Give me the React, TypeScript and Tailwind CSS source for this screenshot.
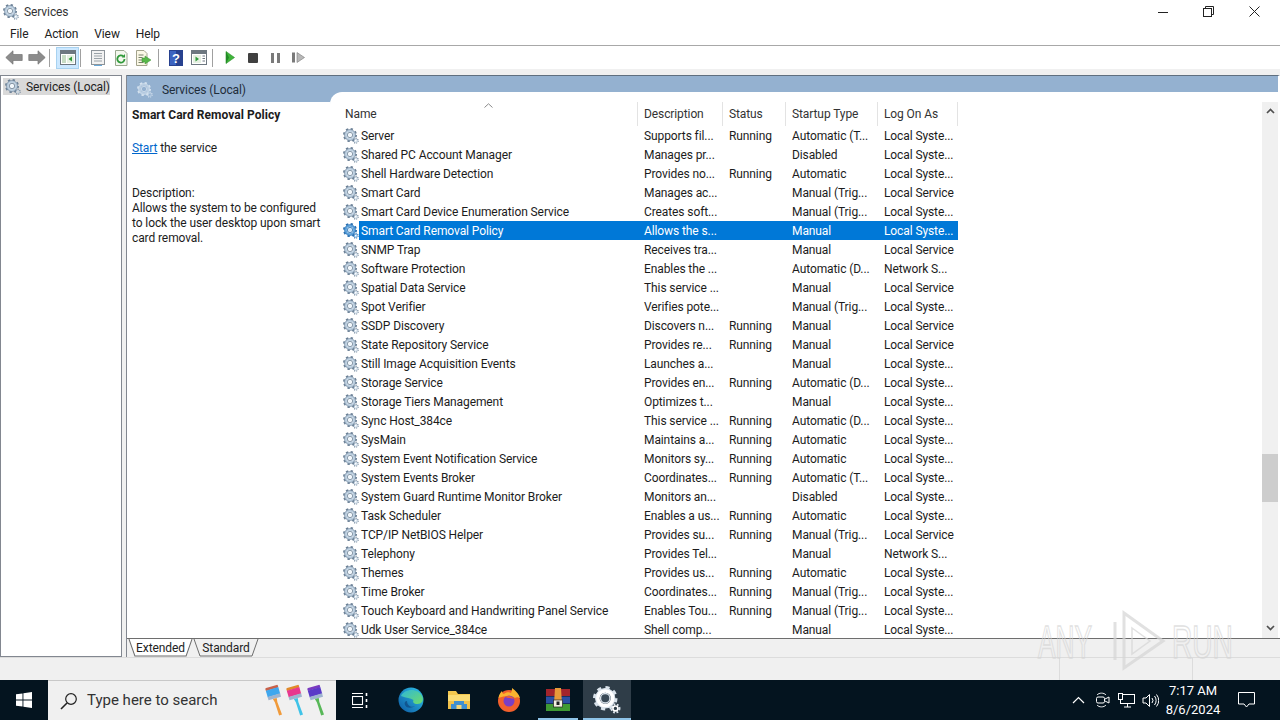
import type { ReactNode } from "react";

type Service = [string, string, string, string, string];

const services: Service[] = [
  ["Server", "Supports fil...", "Running", "Automatic (T...", "Local Syste..."],
  ["Shared PC Account Manager", "Manages pr...", "", "Disabled", "Local Syste..."],
  ["Shell Hardware Detection", "Provides no...", "Running", "Automatic", "Local Syste..."],
  ["Smart Card", "Manages ac...", "", "Manual (Trig...", "Local Service"],
  ["Smart Card Device Enumeration Service", "Creates soft...", "", "Manual (Trig...", "Local Syste..."],
  ["Smart Card Removal Policy", "Allows the s...", "", "Manual", "Local Syste..."],
  ["SNMP Trap", "Receives tra...", "", "Manual", "Local Service"],
  ["Software Protection", "Enables the ...", "", "Automatic (D...", "Network S..."],
  ["Spatial Data Service", "This service ...", "", "Manual", "Local Service"],
  ["Spot Verifier", "Verifies pote...", "", "Manual (Trig...", "Local Syste..."],
  ["SSDP Discovery", "Discovers n...", "Running", "Manual", "Local Service"],
  ["State Repository Service", "Provides re...", "Running", "Manual", "Local Service"],
  ["Still Image Acquisition Events", "Launches a...", "", "Manual", "Local Syste..."],
  ["Storage Service", "Provides en...", "Running", "Automatic (D...", "Local Syste..."],
  ["Storage Tiers Management", "Optimizes t...", "", "Manual", "Local Syste..."],
  ["Sync Host_384ce", "This service ...", "Running", "Automatic (D...", "Local Syste..."],
  ["SysMain", "Maintains a...", "Running", "Automatic", "Local Syste..."],
  ["System Event Notification Service", "Monitors sy...", "Running", "Automatic", "Local Syste..."],
  ["System Events Broker", "Coordinates...", "Running", "Automatic (T...", "Local Syste..."],
  ["System Guard Runtime Monitor Broker", "Monitors an...", "", "Disabled", "Local Syste..."],
  ["Task Scheduler", "Enables a us...", "Running", "Automatic", "Local Syste..."],
  ["TCP/IP NetBIOS Helper", "Provides su...", "Running", "Manual (Trig...", "Local Service"],
  ["Telephony", "Provides Tel...", "", "Manual", "Network S..."],
  ["Themes", "Provides us...", "Running", "Automatic", "Local Syste..."],
  ["Time Broker", "Coordinates...", "Running", "Manual (Trig...", "Local Syste..."],
  ["Touch Keyboard and Handwriting Panel Service", "Enables Tou...", "Running", "Manual (Trig...", "Local Syste..."],
  ["Udk User Service_384ce", "Shell comp...", "", "Manual", "Local Syste..."],
];

function Gear({ size = 16, dark = "#6b8096", light = "#bccfe0", hub = "#f2f7fb" }: { size?: number; dark?: string; light?: string; hub?: string }) {
  return (
    <svg width={size} height={size} viewBox="0 0 16 16" fill="none" className="shrink-0">
      <circle cx="7" cy="7" r="6" stroke={dark} strokeWidth="2" strokeDasharray="2.3 2.4" />
      <circle cx="7" cy="7" r="4.4" stroke={light} strokeWidth="2.4" />
      <circle cx="7" cy="7" r="5.5" stroke={dark} strokeWidth="0.6" />
      <circle cx="7" cy="7" r="2.7" fill={hub} stroke={dark} strokeWidth="0.8" />
      <circle cx="12.8" cy="12.8" r="2.3" stroke={dark} strokeWidth="1.2" strokeDasharray="1 0.9" />
      <circle cx="12.8" cy="12.8" r="1.4" stroke={light} strokeWidth="0.9" />
    </svg>
  );
}

function ToolButton({ active, children }: { active?: boolean; children: ReactNode }) {
  return (
    <div
      className={
        active
          ? "flex h-[22px] w-[23px] items-center justify-center border border-[#a8d2f0] bg-[#cce8ff]"
          : "flex h-[22px] w-[23px] items-center justify-center"
      }
    >
      {children}
    </div>
  );
}

function Toolbar() {
  return (
    <div className="flex h-[23px] shrink-0 items-center pl-[2px]">
      <ToolButton>
        <svg width="18" height="15" viewBox="0 0 18 15"><path d="M.8 7.500 8 .8v3.700h9.200v6H8v3.700z" fill="#8c8c8c" stroke="#747474" strokeWidth=".7" /></svg>
      </ToolButton>
      <ToolButton>
        <svg width="18" height="15" viewBox="0 0 18 15"><path d="M17.200 7.500 10 .8v3.700H.8v6H10v3.700z" fill="#8c8c8c" stroke="#747474" strokeWidth=".7" /></svg>
      </ToolButton>
      <div className="ml-px mr-[6px] h-[18px] w-px bg-[#a0a0a0]" />
      <ToolButton active>
        <svg width="16" height="15" viewBox="0 0 16 15">
          <rect x=".5" y=".5" width="15" height="14" fill="#fff" stroke="#6d7780" />
          <rect x="1" y="1" width="14" height="3" fill="#6d7780" />
          <rect x="2" y="5" width="4" height="8" fill="#c7dcc4" />
          <rect x="7" y="5" width="7" height="8" fill="#e6f0e2" />
          <path d="M12 6.500v5L8.500 9z" fill="#2f9a3a" />
        </svg>
      </ToolButton>
      <div className="ml-px mr-[5px] h-[18px] w-px bg-[#a0a0a0]" />
      <ToolButton>
        <svg width="14" height="16" viewBox="0 0 14 16">
          <rect x=".5" y=".5" width="13" height="14" fill="#f2f2f2" stroke="#8d949a" />
          <path d="M3 3.500h8M3 6h8M3 8.500h8M3 11h8" stroke="#9aa2a8" />
          <path d="M3 15.500h8" stroke="#6aa9d8" />
        </svg>
      </ToolButton>
      <ToolButton>
        <svg width="14" height="16" viewBox="0 0 14 16">
          <path d="M1.500.5H10L13 3.500V15.500H1.500z" fill="#f4f8ee" stroke="#9aa890" />
          <path d="M10.500 9a3.600 3.600 0 1 1-1.100-2.600" fill="none" stroke="#2f9a3a" strokeWidth="1.800" />
          <path d="M11 4v3.400H7.800z" fill="#2f9a3a" />
        </svg>
      </ToolButton>
      <ToolButton>
        <svg width="17" height="16" viewBox="0 0 17 16">
          <path d="M1.500.5H9L12 3.500V15.500H1.500z" fill="#fbf8e6" stroke="#a3a38c" />
          <path d="M3.500 5h5M3.500 7.500h4M3.500 10h4M3.500 12.500h5" stroke="#77806a" />
          <path d="M10 6l6 4-6 4v-2H7V8h3z" fill="#58b84a" stroke="#3e9335" strokeWidth=".5" />
        </svg>
      </ToolButton>
      <div className="ml-[3px] mr-[5px] h-[18px] w-px bg-[#a0a0a0]" />
      <ToolButton>
        <svg width="14" height="16" viewBox="0 0 14 16">
          <rect width="14" height="16" fill="#27418f" />
          <rect x="1" y="1" width="6" height="14" fill="#3c63c0" />
          <text x="7" y="13" textAnchor="middle" fontSize="13" fontWeight="700" fill="#fff" fontFamily="Liberation Sans">?</text>
        </svg>
      </ToolButton>
      <ToolButton>
        <svg width="16" height="15" viewBox="0 0 16 15">
          <rect x=".5" y=".5" width="15" height="14" fill="#fff" stroke="#6d7780" />
          <rect x="1" y="1" width="14" height="3" fill="#6d7780" />
          <rect x="2" y="5" width="8" height="8" fill="#e6f0e2" />
          <path d="M4.500 6.500v5L8 9z" fill="#2f9a3a" />
          <path d="M11.500 6h2.500M11.500 8.500h2.500M11.500 11h2.500" stroke="#6d7780" />
        </svg>
      </ToolButton>
      <div className="ml-[2px] mr-[5px] h-[18px] w-px bg-[#a0a0a0]" />
      <ToolButton>
        <svg width="10" height="13" viewBox="0 0 10 13"><path d="M1 .5 9.500 6.500 1 12.500z" fill="#3fb53a" stroke="#2a8f2a" strokeWidth=".6" /><path d="M1 .5 4 6.500 1 12.500z" fill="#218a25" /></svg>
      </ToolButton>
      <ToolButton>
        <div className="h-[10px] w-[10px] rounded-[1px] bg-[#404040]" />
      </ToolButton>
      <ToolButton>
        <div className="flex gap-[3px]">
          <div className="h-[10px] w-[3px] bg-[#7a7a7a]" />
          <div className="h-[10px] w-[3px] bg-[#7a7a7a]" />
        </div>
      </ToolButton>
      <ToolButton>
        <svg width="13" height="11" viewBox="0 0 13 11"><path d="M0 .5h3v10H0z" fill="#7a7a7a" /><path d="M5 .5 12.500 5.500 5 10.500z" fill="#b8b8b8" stroke="#7a7a7a" strokeWidth=".6" /></svg>
      </ToolButton>
    </div>
  );
}

function HeaderCell({ className, label }: { className: string; label: string }) {
  return (
    <div className={`${className} flex h-full shrink-0 items-center border-r border-[#e3e3e3] text-[#333]`}>
      {label}
    </div>
  );
}

function ServiceRow({ row, selected }: { row: Service; selected: boolean }) {
  return (
    <div className="flex h-[19px] shrink-0 items-center">
      <div className="flex w-[16px] shrink-0 justify-center">
        {selected ? <Gear dark="#2a6fb0" light="#5ea3dc" hub="#cfe6f8" /> : <Gear />}
      </div>
      <div className={selected ? "flex h-full w-[599px] shrink-0 items-center bg-[#0078d7] text-white" : "flex h-full w-[599px] shrink-0 items-center text-[#1c1c1c]"}>
        <span className="w-[278px] shrink-0 whitespace-nowrap pl-[2px]">{row[0]}</span>
        <span className="w-[85px] shrink-0 whitespace-nowrap pl-[7px]">{row[1]}</span>
        <span className="w-[63px] shrink-0 whitespace-nowrap pl-[7px]">{row[2]}</span>
        <span className="w-[92px] shrink-0 whitespace-nowrap pl-[7px]">{row[3]}</span>
        <span className="w-[81px] shrink-0 whitespace-nowrap pl-[7px]">{row[4]}</span>
      </div>
    </div>
  );
}

function Chevron({ up }: { up?: boolean }) {
  return (
    <svg className="shrink-0" width="9" height="6" viewBox="0 0 9 6" fill="none">
      <path d={up ? "M1 5 4.500 1.500 8 5" : "M1 1 4.500 4.500 8 1"} stroke="#505050" strokeWidth="1.700" />
    </svg>
  );
}

function ServiceList() {
  return (
    <div className="flex flex-1 overflow-hidden rounded-tl-[12px] bg-white pt-[10px]">
      <div className="flex min-w-0 flex-1 flex-col overflow-hidden pl-[13px]">
        <div className="relative flex h-[24px] shrink-0 items-center">
          <HeaderCell className="w-[295px] pl-[2px]" label="Name" />
          <HeaderCell className="w-[85px] pl-[6px]" label="Description" />
          <HeaderCell className="w-[63px] pl-[6px]" label="Status" />
          <HeaderCell className="w-[92px] pl-[6px]" label="Startup Type" />
          <HeaderCell className="w-[80px] pl-[6px]" label="Log On As" />
          <svg className="absolute left-[141px] top-[1px]" width="9" height="5" viewBox="0 0 9 5" fill="none">
            <path d="M.5 4.500 4.500.8 8.500 4.500" stroke="#8a8a8a" />
          </svg>
        </div>
        {services.map((row) => (
          <ServiceRow key={row[0]} row={row} selected={row[0] === "Smart Card Removal Policy"} />
        ))}
      </div>
      {/* scrollbar */}
      <div className="flex w-[16px] shrink-0 flex-col items-center bg-[#f0f0f0] pb-[7px] pt-[6px]">
        <Chevron up />
        <div className="mt-[340px] h-[48px] w-full shrink-0 bg-[#cdcdcd]" />
        <div className="mt-auto">
          <Chevron />
        </div>
      </div>
    </div>
  );
}

function Tab({ label, width, active }: { label: string; width: string; active?: boolean }) {
  return (
    <div className={`relative flex h-[18px] items-center justify-center ${width}`}>
      <svg className="absolute inset-0" width="100%" height="18" viewBox="0 0 66 18" preserveAspectRatio="none">
        <path d="M1 0 7 17H59L65 0" fill={active ? "#ffffff" : "#f0f0f0"} stroke="#6e6e6e" vectorEffect="non-scaling-stroke" />
      </svg>
      <span className="relative text-[#222]">{label}</span>
    </div>
  );
}

function Brush({ head, ferrule, handle }: { head: string; ferrule: string; handle: string }) {
  return (
    <svg width="21" height="34" viewBox="0 0 21 34">
      <g transform="rotate(-16 10 17)">
        <rect x="4" y="2" width="13" height="3" rx="1" fill={ferrule} />
        <rect x="4" y="4.500" width="13" height="7" fill={head} />
        <rect x="4" y="11" width="13" height="3.500" fill="#9eb4d0" />
        <path d="M8.500 14.500h4l-.5 4 1 13.500h-3l-.5-13.500z" fill={handle} />
      </g>
    </svg>
  );
}

function TaskbarIcons() {
  return (
    <div className="flex h-full items-center">
      <div className="flex h-full w-[48px] items-center justify-center">
        <svg width="16" height="16" viewBox="0 0 16 16" fill="#fff"><path d="M0 2.300 6.500 1.400V7.500H0zM7.400 1.300 16 0V7.500H7.400zM0 8.400H6.500V14.600L0 13.700zM7.400 8.400H16V16L7.400 14.700z" /></svg>
      </div>
      <div className="flex h-full w-[288px] items-center border-t border-[#c8c8c8] bg-[#f0f0f0] pl-[12px]">
        <svg className="shrink-0" width="18" height="18" viewBox="0 0 18 18" fill="none" stroke="#222" strokeWidth="1.200"><circle cx="11" cy="7" r="5.300" /><path d="M7 11 1 17" strokeWidth="1.600" /></svg>
        <span className="ml-[9px] w-[178px] shrink-0 whitespace-nowrap text-[15px] tracking-normal text-[#333]">Type here to search</span>
        <div className="flex w-[63px] shrink-0">
          <Brush head="#3fa7ee" ferrule="#c8614a" handle="#f09a3a" />
          <Brush head="#e8388f" ferrule="#e08a2a" handle="#3fc3e8" />
          <Brush head="#5a3ac8" ferrule="#7a3ac0" handle="#58b858" />
        </div>
      </div>
      <div className="flex h-full w-[48px] items-center justify-center">
        <svg width="17" height="17" viewBox="0 0 17 17" fill="none" stroke="#fff" strokeWidth="1.100"><path d="M0 1.500h11M0 15.500h11" /><rect x=".5" y="4.500" width="10" height="8" /><path d="M14.500 1v3M14.500 7v3M14.500 13v3" strokeWidth="1.600" /></svg>
      </div>
      <div className="flex h-full w-[54px] items-center justify-center">
        <svg width="26" height="26" viewBox="0 0 26 26">
          <defs>
            <linearGradient id="edgeA" x1="0" y1="1" x2="1" y2="0"><stop offset="0" stopColor="#0c59a4" /><stop offset="1" stopColor="#2fc3e8" /></linearGradient>
            <linearGradient id="edgeB" x1="0" y1="0" x2="1" y2="1"><stop offset="0" stopColor="#2fb8d8" /><stop offset="1" stopColor="#6fdc6a" /></linearGradient>
          </defs>
          <circle cx="13" cy="13" r="12.500" fill="url(#edgeA)" />
          <path d="M3 9C6 2 20 0 24.500 10c1.300 4-1 7-5 7-4 0-5-2-4-4-3-2-7-2-12.500-4z" fill="url(#edgeB)" />
          <path d="M9 14c0 5 5 7 8 5-3 2-8 3-10-1-1-2 0-4 2-4z" fill="#0a2f66" opacity=".5" />
        </svg>
      </div>
      <div className="flex h-full w-[42px] items-center justify-center">
        <svg width="22" height="20" viewBox="0 0 22 20">
          <path d="M0 1h8l2 3h12v15H0z" fill="#f3c74e" />
          <rect y="5" width="22" height="14" fill="#fbdc74" />
          <rect y="11" width="22" height="8" fill="#f0c14a" />
          <path d="M6 11h10v3h3v5H3v-5h3z" fill="#3f8fd0" />
          <rect x="8.500" y="15" width="5" height="4" fill="#f3d77a" />
        </svg>
      </div>
      <div className="flex h-full w-[58px] items-center justify-center">
        <svg width="24" height="24" viewBox="0 0 24 24">
          <circle cx="12" cy="13" r="11" fill="#f2602c" />
          <path d="M1.500 10C2 6 4 4 5 3c0 2 1 3 2 3 2-2 5-2 7-1 1-2 1-4 1-5 4 3 7 6 8 10-2-1-4-1-5 0-4-3-10-2-17 0z" fill="#fbb32f" />
          <circle cx="12" cy="13" r="5.500" fill="#7a3fc4" />
          <path d="M8 9c3-2 7-1 9 2-3-1-6-1-9-2z" fill="#f2602c" />
        </svg>
      </div>
      <div className="relative flex h-full w-[40px] items-center justify-center">
        <svg width="24" height="24" viewBox="0 0 24 24">
          <rect y="1" width="24" height="7" fill="#a3252c" />
          <rect y="8.500" width="24" height="7" fill="#2b4fa3" />
          <rect y="16" width="24" height="7" fill="#3f9a34" />
          <path d="M9 0h6l1 16H8z" fill="#e89b3a" />
          <rect x="7.500" y="12" width="9" height="7" fill="#f3f0e2" stroke="#222" strokeWidth=".7" />
          <rect x="10.500" y="13.500" width="3" height="3.500" fill="#222" />
        </svg>
        <div className="absolute bottom-0 left-0 right-0 h-[2px] bg-[#8fc4e8]" />
      </div>
      <div className="relative ml-[5px] flex h-full w-[48px] items-center justify-center bg-[#2f3d48]">
        <Gear size={28} dark="#d9e2ea" light="#ffffff" hub="#3a4a56" />
        <div className="absolute bottom-0 left-0 right-0 h-[2px] bg-[#8fc4e8]" />
      </div>
    </div>
  );
}

function Tray() {
  return (
    <div className="flex h-full items-center pr-[25px] text-white">
      <svg width="13" height="8" viewBox="0 0 13 8" fill="none" stroke="#fff" strokeWidth="1.200"><path d="M1 7 6.500 1.500 12 7" /></svg>
      <div className="ml-[11px]">
        <svg width="14" height="16" viewBox="0 0 14 16" fill="none" stroke="#fff"><path d="M1 3C3 .5 8 .5 10 3M1 13c2 2.500 7 2.500 9 0" strokeWidth=".9" /><rect x=".5" y="5" width="8" height="6" rx="1.500" /><path d="M9 7l4-2v6L9 9" /></svg>
      </div>
      <div className="ml-[8px]">
        <svg width="17" height="15" viewBox="0 0 17 15" fill="none" stroke="#fff"><rect x="2.500" y="1.500" width="14" height="9" /><rect x=".5" y=".5" width="4" height="6" fill="#04141f" /><path d="M9.500 10.500V14M6 14h7" /></svg>
      </div>
      <div className="ml-[7px]">
        <svg width="17" height="15" viewBox="0 0 17 15" fill="none" stroke="#fff"><path d="M1 5h3l3.500-3.500v12L4 10H1z" /><path d="M10 5a4 4 0 0 1 0 5M12.500 3a7 7 0 0 1 0 9M14.500 1.500a10 10 0 0 1 0 12" /></svg>
      </div>
      <div className="flex w-[68px] flex-col items-center text-[13px] leading-[19px] tracking-normal">
        <span>7:17 AM</span>
        <span>8/6/2024</span>
      </div>
      <div className="ml-[11px]">
        <svg width="17" height="16" viewBox="0 0 17 16" fill="none" stroke="#fff"><path d="M.5.500h16v11.500H11l-2.500 3-2.500-3H.5z" /></svg>
      </div>
    </div>
  );
}

export default function App() {
  return (
    <div className="relative flex h-[720px] w-[1280px] flex-col overflow-hidden bg-white font-['Roboto',sans-serif] text-[12px] tracking-[-0.1px] text-[#1c1c1c]">
      {/* title bar */}
      <div className="flex h-[23px] shrink-0 items-center pl-[3px]">
        <Gear />
        <span className="ml-[5px] text-[#333]">Services</span>
        <div className="ml-auto flex items-center">
          <svg width="10" height="10" viewBox="0 0 10 10"><path d="M0 5.500h10" stroke="#222" /></svg>
          <svg className="ml-[35px]" width="11" height="11" viewBox="0 0 11 11" fill="none" stroke="#222"><rect x=".5" y="2.500" width="8" height="8" /><path d="M2.500 2.500V.5h8v8h-2" /></svg>
          <svg className="ml-[35px] mr-[20px]" width="11" height="11" viewBox="0 0 11 11" stroke="#222"><path d="M.5.500l10 10M10.500.5l-10 10" /></svg>
        </div>
      </div>

      {/* menu */}
      <div className="flex h-[23px] shrink-0 items-center gap-[16px] border-b border-[#a8a8a8] pb-px pl-[10px] text-[#222]">
        <span>File</span>
        <span>Action</span>
        <span>View</span>
        <span>Help</span>
      </div>

      <Toolbar />
      <div className="h-[6px] shrink-0 bg-[#f0f0f0]" />

      {/* panes */}
      <div className="flex h-[582px] shrink-0 bg-[#f0f0f0]">
        <div className="w-[122px] shrink-0 border border-[#828790] bg-white p-[2px]">
          <div className="flex h-[17px] w-[107px] items-center gap-[5px] bg-[#d9d9d9] pl-[2px]">
            <Gear />
            <span className="whitespace-nowrap text-[#222]">Services (Local)</span>
          </div>
        </div>
        <div className="ml-[4px] flex min-w-0 flex-1 flex-col border-l border-[#828790]">
          <div className="flex h-[563px] shrink-0 border-r-2 border-t border-[#5f6f7f] border-r-white">
            <div className="flex w-[203px] shrink-0 flex-col">
              <div className="flex h-[26px] shrink-0 items-center gap-[9px] bg-[#94b1d0] pl-[10px] pt-px">
                <Gear dark="#d5e2ef" light="#b9cde2" hub="#94b1d0" />
                <span className="whitespace-nowrap text-[#1f2d3a]">Services (Local)</span>
              </div>
              <div className="flex flex-1 flex-col bg-white pl-[5px]">
                <div className="mt-[5px] whitespace-nowrap font-bold leading-[17px] tracking-[0.05px]">Smart Card Removal Policy</div>
                <div className="mt-[16px] leading-[17px]">
                  <span className="text-[#0066cc] underline">Start</span> the service
                </div>
                <div className="mt-[29px] w-[196px] leading-[15px]">
                  <div>Description:</div>
                  <div>Allows the system to be configured to lock the user desktop upon smart card removal.</div>
                </div>
              </div>
            </div>
            <div className="flex min-w-0 flex-1 flex-col bg-[#94b1d0]">
              <div className="h-[16px] shrink-0" />
              <ServiceList />
            </div>
          </div>
          <div className="flex h-[19px] shrink-0 border-t border-[#6e6e6e] pl-px">
            <Tab label="Extended" width="w-[65px]" active />
            <Tab label="Standard" width="w-[66px]" />
          </div>
        </div>
      </div>

      {/* status bar */}
      <div className="flex h-[23px] shrink-0 border-t border-[#dcdcdc] bg-[#f0f0f0]">
        <div className="w-[1060px] border-r border-[#dcdcdc]" />
        <div className="w-[133px] border-r border-[#dcdcdc]" />
      </div>

      {/* taskbar */}
      <div className="flex h-[40px] shrink-0 items-center justify-between bg-[#04141f]">
        <TaskbarIcons />
        <Tray />
      </div>

      {/* watermark */}
      <div className="pointer-events-none absolute left-[1038px] top-[608px] flex h-[66px] items-center font-['Liberation_Sans',sans-serif] text-[47px] leading-none text-transparent opacity-70 [-webkit-text-stroke:1.500px_#d5d5d5]">
        <span className="inline-block w-[72px] origin-left scale-x-[.56]">ANY</span>
        <svg className="shrink-0" width="58" height="66" viewBox="0 0 58 66" fill="none" stroke="#d5d5d5" strokeWidth="3">
          <path d="M5 14v38M14 5 53 33 14 60z" />
          <path d="M22 20 40 33 22 46z" strokeWidth="1.500" />
        </svg>
        <span className="ml-[4px] inline-block origin-left scale-x-[.6]">RUN</span>
      </div>
    </div>
  );
}
